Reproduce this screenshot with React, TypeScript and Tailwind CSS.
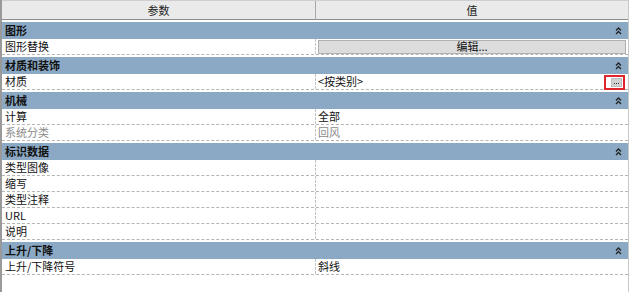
const font = { fontFamily: '"Noto Sans CJK SC", "Liberation Sans", sans-serif' };

const Collapse = () => (
  <svg width="7" height="8" viewBox="0 0 7 8" className="mr-[6px]">
    <path d="M1 3.5 L3.5 1 L6 3.5" stroke="#222" strokeWidth="1.3" fill="none" />
    <path d="M1 7 L3.5 4.5 L6 7" stroke="#222" strokeWidth="1.3" fill="none" />
  </svg>
);

const Group = ({ title }: { title: string }) => (
  <div className="mt-[2px] h-[17px] bg-[#8ba9c4] flex items-center justify-between pl-[3px]">
    <span className="text-[11px] font-bold text-[#111] leading-none">{title}</span>
    <Collapse />
  </div>
);

interface RowProps {
  label: string;
  value?: string;
  muted?: boolean;
  children?: React.ReactNode;
}

const Row = ({ label, value, muted, children }: RowProps) => (
  <div className="h-[16px] flex border-b border-dashed border-[#b5b5b5]">
    <div
      className={`w-[314px] shrink-0 pl-[3px] flex items-center text-[11px] leading-none border-r border-dashed border-[#c4c4c4] ${
        muted ? "text-[#8a8a8a]" : "text-[#111]"
      }`}
    >
      {label}
    </div>
    <div
      className={`flex-1 flex items-center pl-[2px] text-[11px] leading-none ${
        muted ? "text-[#8a8a8a]" : "text-[#111]"
      }`}
    >
      {children ?? value}
    </div>
  </div>
);

export default function App() {
  return (
    <div className="w-[637px] h-[305px] bg-white" style={font}>
      <div className="w-[629px] h-[292px] border-l-2 border-r border-l-[#9a9a9a] border-r-[#c8c8c8]">
        {/* Header */}
        <div className="h-[20px] flex bg-[#eaeaea] border-t border-b border-t-[#cfcfcf] border-b-[#8f8f8f]">
          <div className="w-[314px] shrink-0 flex items-center justify-center text-[11px] text-[#222] border-r border-[#a8a8a8]">
            参数
          </div>
          <div className="flex-1 flex items-center justify-center text-[11px] text-[#222]">值</div>
        </div>

        <Group title="图形" />
        <Row label="图形替换">
          <div className="w-[308px] h-[14px] bg-[#dcdcdc] border border-[#b0b0b0] flex items-center justify-center text-[11px] leading-none">
            编辑...
          </div>
        </Row>

        <Group title="材质和装饰" />
        <div className="relative">
          <Row label="材质" value="<按类别>" />
          {/* highlighted browse button */}
          <div className="absolute left-[602px] top-[1px] w-[21px] h-[15px] border-2 border-[#e0262b] flex items-center justify-end pr-[1px]">
            <div className="w-[11px] h-[9px] bg-[#d2d2d2] border border-[#bdbdbd] flex items-end justify-center gap-[1px] pb-[2px]">
              <span className="w-[1px] h-[1px] bg-[#333]" />
              <span className="w-[1px] h-[1px] bg-[#333]" />
              <span className="w-[1px] h-[1px] bg-[#333]" />
            </div>
          </div>
        </div>

        <Group title="机械" />
        <Row label="计算" value="全部" />
        <Row label="系统分类" value="回风" muted />

        <Group title="标识数据" />
        <Row label="类型图像" />
        <Row label="缩写" />
        <Row label="类型注释" />
        <Row label="URL" />
        <Row label="说明" />

        <Group title="上升/下降" />
        <Row label="上升/下降符号" value="斜线" />
      </div>
    </div>
  );
}
